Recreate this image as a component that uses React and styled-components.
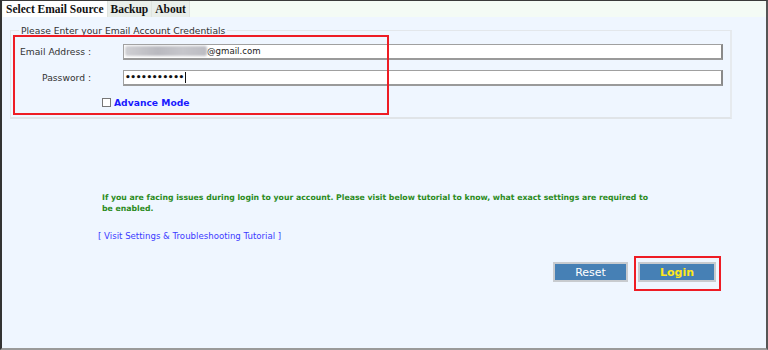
import React from 'react';
import styled, { createGlobalStyle } from 'styled-components';

const GlobalStyle = createGlobalStyle`
  html, body { margin: 0; padding: 0; background: #fff; }
  body { font-family: "DejaVu Sans", Verdana, sans-serif; }
`;

const Frame = styled.div`
  width: 768px;
  height: 350px;
  box-sizing: border-box;
  border-top: 1px solid #3a3a3a;
  border-left: 2px solid #333;
  border-right: 2px solid #555;
  border-bottom: 2px solid #9a9a9a;
  display: flex;
  flex-direction: column;
  background: #eff6ff;
`;

const TabBar = styled.div`
  height: 16px;
  display: flex;
  align-items: stretch;
  padding-left: 1px;
  background: #f4fbf5;
`;

const Tab = styled.div`
  font-family: "Liberation Serif", "Times New Roman", serif;
  font-weight: bold;
  font-size: 11.5px;
  color: #111;
  padding: 0 3px;
  display: flex;
  align-items: center;
  background: ${p => (p.active ? '#ffffff' : '#e9eeea')};
  border-right: 1px solid #dfe4df;
`;

const Panel = styled.div`
  flex: 1;
  position: relative;
  display: flex;
  flex-direction: column;
  padding: 8px 0 0 8px;
`;

const Fieldset = styled.fieldset`
  width: 722px;
  box-sizing: border-box;
  margin: 0;
  padding: 3px 0 4px 0;
  border: 1px solid #e3e7eb;
  border-bottom: 2px solid #e0e4e8;
  border-right: 2px solid #e6eaee;
  font-size: 9px;
  color: #333;
`;

const Legend = styled.legend`
  padding: 0 2px;
  margin-left: 8px;
  font-size: 9.2px;
  color: #333;
`;

const Row = styled.div`
  display: flex;
  align-items: center;
  height: ${p => p.h || 27}px;
`;

const Label = styled.label`
  width: 80px;
  text-align: right;
  font-size: 9.2px;
  color: #333;
`;

const Input = styled.div`
  margin-left: 32px;
  width: 600px;
  height: 16px;
  box-sizing: border-box;
  background: #fff;
  border: 1px solid #a0a0a0;
  border-right-color: #8a8a8a;
  border-bottom: 2px solid #9a9a9a;
  border-right-width: 2px;
  display: flex;
  align-items: center;
  padding-left: 1px;
  font-size: 8.6px;
  color: #222;
`;

const Blurred = styled.span`
  display: inline-block;
  width: 82px;
  height: 10px;
  background: linear-gradient(90deg, #cfcfd3, #b9b9bf 40%, #c6c6cb 70%, #bcbcc2);
  filter: blur(1.2px);
  border-radius: 2px;
`;

const Dots = styled.span`
  font-size: 9px;
  letter-spacing: -0.4px;
  color: #111;
  border-right: 1px solid #111;
  padding-right: 1px;
  line-height: 11px;
  font-weight: bold;
`;

const CheckRow = styled.div`
  display: flex;
  align-items: center;
  margin-left: 91px;
  height: 22px;
`;

const Check = styled.span`
  width: 7px;
  height: 7px;
  border: 1px solid #777;
  background: #fff;
  margin-right: 3px;
`;

const CheckLabel = styled.span`
  font-weight: bold;
  font-size: 9.2px;
  color: #1a1aff;
`;

const Highlight = styled.div`
  position: absolute;
  left: ${p => p.x}px;
  top: ${p => p.y}px;
  width: ${p => p.w}px;
  height: ${p => p.h}px;
  box-sizing: border-box;
  border: 2px solid #ee1c24;
  pointer-events: none;
`;

const Note = styled.p`
  margin: 73px 0 0 92px;
  width: 548px;
  font-size: 7.75px;
  line-height: 11px;
  font-weight: bold;
  color: #2b8b22;
`;

const TutorialLink = styled.a`
  display: block;
  margin: 17px 0 0 88px;
  font-size: 8.6px;
  color: #3b3bff;
  text-decoration: none;
`;

const Actions = styled.div`
  display: flex;
  gap: 10px;
  margin: 21px 0 0 543px;
`;

const Button = styled.button`
  width: ${p => p.w}px;
  height: 20px;
  box-sizing: border-box;
  border: 2px solid #c8cbcf;
  background: #4680b5;
  color: ${p => (p.primary ? '#ffe81a' : '#ffffff')};
  font-family: "DejaVu Sans", Verdana, sans-serif;
  font-weight: ${p => (p.primary ? 'bold' : 'normal')};
  font-size: 11px;
  padding: 0;
  cursor: pointer;
`;

export default function App() {
  return (
    <>
      <GlobalStyle />
      <Frame>
        <TabBar>
          <Tab active>Select Email Source</Tab>
          <Tab>Backup</Tab>
          <Tab>About</Tab>
        </TabBar>
        <Panel>
          <Fieldset>
            <Legend>Please Enter your Email Account Credentials</Legend>
            <Row h={25}>
              <Label>Email Address :</Label>
              <Input>
                <Blurred />
                <span>@gmail.com</span>
              </Input>
            </Row>
            <Row h={27}>
              <Label>Password :</Label>
              <Input>
                <Dots>•••••••••••</Dots>
              </Input>
            </Row>
            <CheckRow>
              <Check />
              <CheckLabel>Advance Mode</CheckLabel>
            </CheckRow>
          </Fieldset>
          <Highlight x={11} y={18} w={376} h={80} />
          <Note>
            If you are facing issues during login to your account. Please visit below tutorial to know, what exact settings are required to be enabled.
          </Note>
          <TutorialLink href="#">[ Visit Settings &amp; Troubleshooting Tutorial ]</TutorialLink>
          <Actions>
            <Button w={75}>Reset</Button>
            <Button w={78} primary>Login</Button>
          </Actions>
          <Highlight x={632} y={239} w={87} h={35} />
        </Panel>
      </Frame>
    </>
  );
}
